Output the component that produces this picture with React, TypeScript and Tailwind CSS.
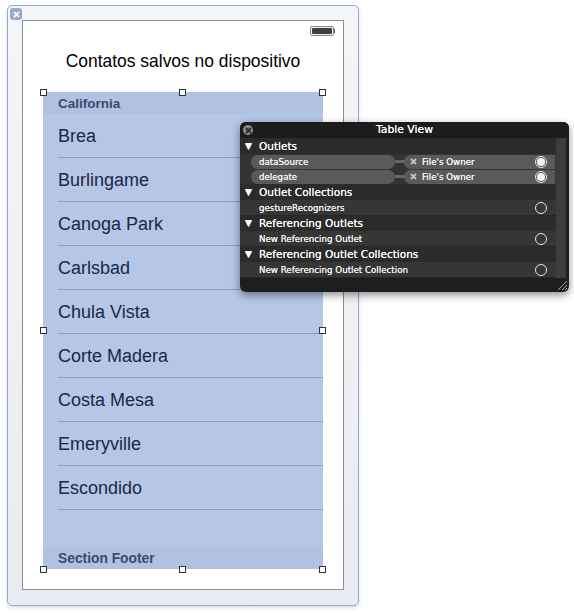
const cities = ['Brea', 'Burlingame', 'Canoga Park', 'Carlsbad', 'Chula Vista', 'Corte Madera', 'Costa Mesa', 'Emeryville', 'Escondido', ''];

const handles = [
  'left-[40px] top-[89px]',
  'left-[179px] top-[89px]',
  'left-[319px] top-[89px]',
  'left-[40px] top-[327px]',
  'left-[319px] top-[327px]',
  'left-[40px] top-[566px]',
  'left-[179px] top-[566px]',
  'left-[319px] top-[566px]',
];

function CloseGlyph({ color }: { color: string }) {
  return (
    <svg width="7" height="7" viewBox="0 0 7 7">
      <path d="M1 1l5 5M6 1l-5 5" stroke={color} strokeWidth="1.8" />
    </svg>
  );
}

function Radio({ on }: { on?: boolean }) {
  return (
    <div className="absolute left-[295px] top-[2px] w-[12px] h-[12px] rounded-full border border-[#e4e4e4] flex items-center justify-center">
      {on && <div className="w-[8px] h-[8px] rounded-full bg-[#f2f2f2]" />}
    </div>
  );
}

function SectionHead({ label, first }: { label: string; first?: boolean }) {
  return (
    <div className={`${first ? 'h-[16px]' : 'h-[15.5px]'} bg-[#2b2b2b] flex items-center text-white text-[10.5px] leading-none [text-shadow:0_0_0.6px_#ffffff]`}>
      <span className="w-[18px] pl-[5px] text-[9px]">▼</span>
      <span className="pl-[1px]">{label}</span>
    </div>
  );
}

function ConnectedRow({ label }: { label: string }) {
  return (
    <div className="relative h-[15px] bg-[#333333] flex items-center text-[#f4f4f4] text-[8.7px] [text-shadow:0_0_0.5px_#ffffff]">
      <div className="absolute left-[155px] top-[6px] w-[10px] h-[3px] bg-[#666666]" />
      <div className="ml-[11px] w-[144px] h-[14px] rounded-full bg-[#5a5a5a] pl-[8px] leading-[14px]">{label}</div>
      <div className="ml-[9px] w-[151px] h-[14px] rounded-l-full bg-[#5a5a5a] flex items-center pl-[6px] gap-[5px] leading-[14px]">
        <CloseGlyph color="#c4c4c4" />
        <span>File's Owner</span>
      </div>
      <Radio on />
    </div>
  );
}

function PlainRow({ label }: { label: string }) {
  return (
    <div className="relative h-[15.5px] bg-[#363636] border-b border-[#262626] text-[#f4f4f4] text-[8.7px] leading-[16px] pl-[19px] [text-shadow:0_0_0.5px_#ffffff]">
      {label}
      <Radio />
    </div>
  );
}

export default function App() {
  return (
    <div className="relative w-[574px] h-[613px] bg-white overflow-hidden font-['Liberation_Sans',sans-serif]">
      {/* nib window */}
      <div className="absolute left-[7px] top-[5px] w-[352px] h-[601px] rounded-[5px] border border-[#93a6d6] bg-gradient-to-b from-[#f4f5f8] to-[#e8ebf0] shadow-[0_2px_4px_rgba(0,0,0,0.12)] pt-[14px] pl-[14px]">
        <div className="absolute left-[2px] top-[2px] w-[12px] h-[12px] rounded-[3px] bg-[#9aabc7] flex items-center justify-center">
          <CloseGlyph color="#f4f6fa" />
        </div>
        <div className="w-[322px] h-[570px] bg-white border border-[#8c8c8c] flex flex-col items-center">
          <div className="w-full h-[15px] flex justify-end items-center pr-[8px] pt-[5px]">
            <div className="w-[24px] h-[10px] rounded-[2px] border border-[#8a8a8a] p-[1px] bg-[#eeeeee]">
              <div className="w-full h-full bg-[#404040] rounded-[1px]" />
            </div>
            <div className="w-[1px] h-[4px] bg-[#555555]" />
          </div>
          <div className="h-[56px] pt-[13px] text-[17.45px] leading-[24px] text-black">Contatos salvos no dispositivo</div>
          <div className="w-[280px] h-[477px] bg-[#b5c6e7] flex flex-col">
            <div className="h-[22px] bg-[#b0c1e2] pl-[15px] text-[13.5px] font-bold leading-[23px] text-[#3b4a70]">California</div>
            {cities.map((city, i) => (
              <div key={i} className="h-[44px] ml-[15px] border-b border-[#8f9dbd] text-[18px] leading-[45px] text-[#1b2845]">
                {city}
              </div>
            ))}
            <div className="mt-[-3px] h-[22px] bg-[#b0c1e2] pl-[15px] text-[13.8px] font-bold leading-[23px] text-[#3b4a70]">Section Footer</div>
          </div>
        </div>
      </div>

      {handles.map((pos) => (
        <div key={pos} className={`absolute ${pos} w-[7px] h-[7px] bg-white border border-[#333333]`} />
      ))}

      {/* connections panel */}
      <div className="absolute left-[240px] top-[122px] w-[329px] h-[170px] rounded-[6px] bg-[#1e1e1e] shadow-[0_3px_8px_rgba(0,0,0,0.45)] overflow-hidden font-['DejaVu_Sans',sans-serif]">
        <div className="relative h-[16px] bg-[#1c1c1c] text-center text-white text-[10.8px] leading-[16px] [text-shadow:0_0_0.6px_#ffffff]">
          <div className="absolute left-[3px] top-[3px] w-[10px] h-[10px] rounded-full bg-[#8a8a8a] flex items-center justify-center">
            <CloseGlyph color="#2a2a2a" />
          </div>
          Table View
        </div>
        <div className="flex">
          <div className="w-[316px]">
            <SectionHead first label="Outlets" />
            <ConnectedRow label="dataSource" />
            <ConnectedRow label="delegate" />
            <SectionHead first label="Outlet Collections" />
            <PlainRow label="gestureRecognizers" />
            <SectionHead label="Referencing Outlets" />
            <PlainRow label="New Referencing Outlet" />
            <SectionHead label="Referencing Outlet Collections" />
            <PlainRow label="New Referencing Outlet Collection" />
          </div>
          <div className="w-[10px] h-[140px] bg-[#3d3d3d]" />
        </div>
        <svg className="absolute right-[1px] bottom-[1px]" width="12" height="12" viewBox="0 0 12 12">
          <path d="M2 11L11 2M6 11l5-5M9 11l2-2" stroke="#a8a8a8" strokeWidth="1" />
        </svg>
      </div>
    </div>
  );
}
